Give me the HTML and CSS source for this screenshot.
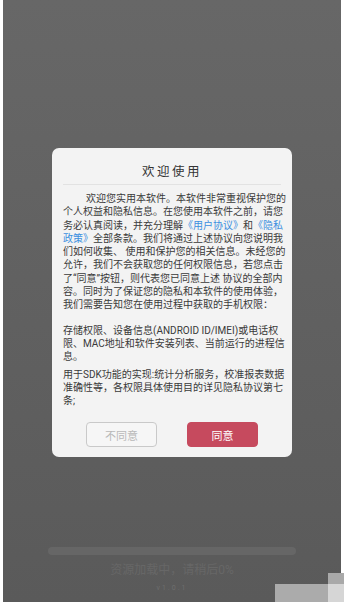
FILE: index.html
```html
<!DOCTYPE html>
<html lang="zh-CN">
<head>
<meta charset="utf-8">
<title>欢迎使用</title>
<link rel="stylesheet" href="styles.css">
</head>
<body>
<div class="screen">
  <div class="edge edge-left"></div>
  <main class="stage">
    <section class="dialog">
      <h1 class="dialog-title">欢迎使用</h1>
      <div class="dialog-body">
        <p class="para para-indent">欢迎您实用本软件。本软件非常重视保护您的<br>个人权益和隐私信息。在您使用本软件之前，请您<br>务必认真阅读，并充分理解<a class="link">《用户协议》</a>和<a class="link">《隐私<br>政策》</a>全部条款。我们将通过上述协议向您说明我<br>们如何收集、 使用和保护您的相关信息。未经您的<br>允许，我们不会获取您的任何权限信息，若您点击<br>了“同意”按钮，则代表您已同意上述 协议的全部内<br>容。同时为了保证您的隐私和本软件的使用体验，<br>我们需要告知您在使用过程中获取的手机权限：</p>
        <p class="para para-gap-lg">存储权限、设备信息(ANDROID ID/IMEI)或电话权<br>限、MAC地址和软件安装列表、当前运行的进程信<br>息。</p>
        <p class="para para-gap-sm">用于SDK功能的实现:统计分析服务，校准报表数据<br>准确性等，各权限具体使用目的详见隐私协议第七<br>条;</p>
      </div>
      <div class="dialog-actions">
        <button class="btn btn-decline">不同意</button>
        <button class="btn btn-accept">同意</button>
      </div>
    </section>
    <div class="loader">
      <div class="bar"></div>
      <div class="load-text">资源加载中，请稍后0%</div>
      <div class="version">v1.0.1</div>
    </div>
  </main>
  <div class="edge edge-right"></div>
  <div class="mark mark-a"></div>
  <div class="mark mark-b"></div>
  <div class="mark mark-c"></div>
</div>
</body>
</html>
```
FILE: styles.css
```css
html, body {
  margin: 0;
  padding: 0;
  background: #ffffff;
}
body {
  width: 346px;
  height: 602px;
  overflow: hidden;
  font-family: Roboto, "Noto Sans CJK SC", sans-serif;
}
.screen {
  position: relative;
  display: flex;
  width: 346px;
  height: 602px;
}
.edge {
  background: #ffffff;
}
.edge-left {
  width: 3px;
}
.edge-right {
  width: 5px;
}
.stage {
  width: 338px;
  height: 602px;
  box-sizing: border-box;
  padding-top: 148px;
  display: flex;
  flex-direction: column;
  align-items: center;
  background: linear-gradient(#676767, #5a5a5a);
}
.dialog {
  width: 240px;
  box-sizing: border-box;
  background: #f3f3f3;
  border-radius: 7px;
  padding: 0 11px 10px;
}
.dialog-title {
  margin: 0;
  padding: 16px 0 4px;
  font-size: 12.5px;
  line-height: 16px;
  font-weight: normal;
  letter-spacing: 2.5px;
  text-align: center;
  color: #333333;
  border-bottom: 1px solid #e2e2e2;
}
.dialog-body {
  padding-top: 7px;
  color: #3a3a3a;
  font-size: 10px;
  line-height: 13.3px;
  white-space: nowrap;
}
.para {
  margin: 0;
}
.para-indent {
  text-indent: 2.3em;
}
.para-gap-lg {
  margin-top: 12px;
}
.para-gap-sm {
  margin-top: 4px;
}
.link {
  color: #3b8fe0;
}
.dialog-actions {
  display: flex;
  justify-content: center;
  gap: 30px;
  margin-top: 15px;
}
.btn {
  width: 71px;
  height: 25px;
  box-sizing: border-box;
  border-radius: 4px;
  font-family: inherit;
  font-size: 11px;
  padding: 0;
  cursor: pointer;
}
.btn-decline {
  background: #f6f6f6;
  border: 1px solid #c9c9c9;
  color: #b9b9b9;
}
.btn-accept {
  background: #c64a5e;
  border: 1px solid #c64a5e;
  color: #ffffff;
}
.loader {
  margin-top: auto;
  padding-bottom: 10px;
  display: flex;
  flex-direction: column;
  align-items: center;
  width: 100%;
}
.bar {
  width: 248px;
  height: 8px;
  border-radius: 4px;
  background: #666666;
}
.load-text {
  margin-top: 8px;
  font-size: 12px;
  line-height: 14px;
  color: #676767;
}
.version {
  margin-top: 7px;
  font-size: 7px;
  line-height: 8px;
  letter-spacing: 2px;
  color: #6e6e6e;
}
.mark {
  position: absolute;
}
.mark-a {
  left: 275px;
  top: 584px;
  width: 53px;
  height: 18px;
  background: #ababab;
}
.mark-b {
  left: 328px;
  top: 573px;
  width: 16px;
  height: 11px;
  background: #a9a9a9;
}
.mark-c {
  left: 328px;
  top: 584px;
  width: 16px;
  height: 18px;
  background: #d6d6d6;
}
```
